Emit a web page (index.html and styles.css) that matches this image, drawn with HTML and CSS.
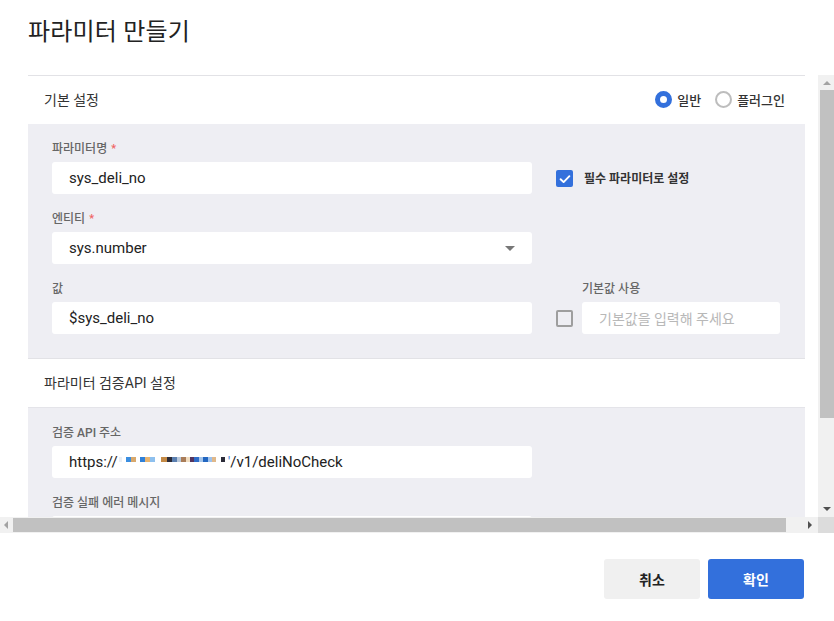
FILE: index.html
```html
<!DOCTYPE html>
<html lang="ko">
<head>
<meta charset="utf-8">
<title>파라미터 만들기</title>
<link rel="stylesheet" href="styles.css">
</head>
<body>
<div class="dialog">
  <header class="dlg-head">
    <h1 class="dlg-title">파라미터 만들기</h1>
  </header>

  <div class="scroll-frame">
    <div class="viewport">
      <div class="content">
        <section class="section">
          <div class="sec-head">
            <span class="sec-title">기본 설정</span>
            <div class="radios">
              <label class="radio on"><span class="radio-dot"></span>일반</label>
              <label class="radio"><span class="radio-dot"></span>플러그인</label>
            </div>
          </div>
          <div class="panel">
            <div class="row">
              <div class="col-main">
                <div class="label">파라미터명 <span class="req">*</span></div>
                <div class="input">sys_deli_no</div>
              </div>
              <div class="col-side align-input">
                <span class="check on"><svg viewBox="0 0 16 16" width="16" height="16"><path d="M3.6 8.2 L6.6 11.1 L12.4 5.2" fill="none" stroke="#fff" stroke-width="1.9" stroke-linecap="round" stroke-linejoin="round"/></svg></span>
                <span class="check-text">필수 파라미터로 설정</span>
              </div>
            </div>
            <div class="row">
              <div class="col-main">
                <div class="label">엔티티 <span class="req">*</span></div>
                <div class="input select">sys.number<span class="caret"></span></div>
              </div>
            </div>
            <div class="row">
              <div class="col-main">
                <div class="label">값</div>
                <div class="input">$sys_deli_no</div>
              </div>
              <div class="col-side align-input">
                <span class="check off"></span>
                <div class="default-field">
                  <div class="label">기본값 사용</div>
                  <div class="input small placeholder">기본값을 입력해 주세요</div>
                </div>
              </div>
            </div>
          </div>
        </section>

        <section class="section">
          <div class="sec-head">
            <span class="sec-title">파라미터 검증API 설정</span>
          </div>
          <div class="panel">
            <div class="row">
              <div class="col-main">
                <div class="label">검증 API 주소</div>
                <div class="input">https://<span class="mosaic"><i class="m0"></i><i class="gap"></i><i class="m1"></i><i class="m2"></i><i class="gap"></i><i class="m3"></i><i class="m4"></i><i class="m5"></i><i class="gap2"></i><i class="m6"></i><i class="m7"></i><i class="m8"></i><i class="m9"></i><i class="m10"></i><i class="m11"></i><i class="m12"></i><i class="m13"></i><i class="m14"></i><i class="m15"></i><i class="m16"></i><i class="m17"></i><i class="m18"></i></span><span class="apos">'</span>/v1/deliNoCheck</div>
              </div>
            </div>
            <div class="row">
              <div class="col-main">
                <div class="label">검증 실패 에러 메시지</div>
                <div class="input"></div>
              </div>
            </div>
          </div>
        </section>
      </div>
    </div>

    <div class="vbar">
      <span class="arr up"></span>
      <span class="vthumb"></span>
      <span class="arr down"></span>
    </div>
    <div class="hbar">
      <span class="arr left"></span>
      <span class="hthumb"></span>
      <span class="arr right"></span>
    </div>
    <div class="corner"></div>
  </div>

  <footer class="dlg-foot">
    <button class="btn cancel">취소</button>
    <button class="btn ok">확인</button>
  </footer>
</div>
</body>
</html>
```

FILE: styles.css
```css
* { box-sizing: border-box; }
html, body { margin: 0; padding: 0; }
body {
  width: 834px;
  height: 621px;
  background: #fff;
  font-family: Roboto, "Noto Sans CJK KR", sans-serif;
  color: #222;
  overflow: hidden;
}
.dialog { display: flex; flex-direction: column; height: 621px; }

.dlg-head { height: 75px; padding: 14px 28px 0; }
.dlg-title {
  margin: 0;
  font-size: 24px;
  line-height: 36px;
  font-weight: 400;
  color: #222;
  letter-spacing: 0.2px;
}

.scroll-frame {
  display: grid;
  grid-template-columns: 818px 16px;
  grid-template-rows: 442px 16px;
  height: 458px;
}
.viewport { overflow: hidden; }
.content { width: 833px; padding: 0 28px; }

.section { border-top: 1px solid #e2e2e6; }
.section + .section { border-top: none; }
.sec-head {
  height: 48px;
  display: flex;
  align-items: center;
  justify-content: space-between;
  padding: 0 20px 2px 16px;
}
.sec-title { font-size: 14px; color: #333; font-weight: 400; }

.radios { display: flex; gap: 14px; }
.radio {
  display: flex;
  align-items: center;
  gap: 5px;
  font-size: 13px;
  color: #333;
  font-weight: 500;
}
.radio-dot {
  width: 17px; height: 17px;
  border-radius: 50%;
  border: 2px solid #bdbdbd;
  background: #fff;
}
.radio.on .radio-dot {
  border: 5px solid #3370dc;
  background: #fff;
}

.panel {
  background: #eeeef3;
  padding: 16px 24px 24px;
  display: flex;
  flex-direction: column;
  gap: 16px;
  border-bottom: 1px solid #e2e2e6;
}
.section + .section .panel { border-top: 1px solid #e4e4e9; padding-top: 16px; }
.row { display: flex; gap: 24px; }
.col-main { width: 480px; display: flex; flex-direction: column; gap: 4px; }
.col-side { display: flex; gap: 10px; }
.col-side.align-input { align-items: flex-end; }

.label {
  height: 18px;
  display: flex;
  align-items: center;
  gap: 4px;
  font-size: 12px;
  line-height: 18px;
  color: #666;
  font-weight: 500;
  white-space: nowrap;
}
.req { color: #f06262; font-size: 11px; }

.input {
  height: 32px;
  background: #fff;
  border-radius: 3px;
  padding: 0 17px;
  display: flex;
  align-items: center;
  font-size: 15px;
  color: #222;
  white-space: nowrap;
}
.input.select { justify-content: space-between; padding-right: 17px; }
.caret {
  width: 0; height: 0;
  border-left: 5px solid transparent;
  border-right: 5px solid transparent;
  border-top: 5px solid #777;
}
.input.small { width: 198px; font-size: 14px; }
.placeholder { color: #b8b8b8; }

.check {
  width: 17px; height: 17px;
  border-radius: 2px;
  display: inline-flex;
  align-items: center;
  justify-content: center;
  flex: none;
}
.check.on { background: #3370dc; margin-bottom: 7px; }
.check.off { border: 2px solid #9e9e9e; background: transparent; margin-bottom: 7px; margin-right: -1px; }
.check-text { font-size: 12px; font-weight: 700; color: #333; margin-bottom: 8px; margin-left: 1px; }
.default-field { display: flex; flex-direction: column; gap: 4px; }

.mosaic { display: inline-flex; align-items: center; height: 8px; margin: 0 1px 5px 1px; }
.mosaic i { display: inline-block; height: 5px; width: 5px; }
.mosaic .gap { width: 4px; }
.mosaic .gap2 { width: 6px; }
.m0 { background: #e9eef5; width: 3px !important; }
.m1 { background: #3b8ee0; }
.m2 { background: #d8a86c; width: 5px !important; }
.m3 { background: #2f80d8; }
.m4 { background: #e8b470; }
.m5 { background: #8ec0ee; width: 5px !important; }
.m6 { background: #c48a46; width: 6px !important; }
.m7 { background: #2b2b38; }
.m8 { background: #5a7fb0; }
.m9 { background: #b9c8da; width: 4px !important; }
.m10 { background: #a97c58; }
.m11 { background: #f0dcc0; width: 4px !important; }
.m12 { background: #55355e; width: 4px !important; }
.m13 { background: #2e6cc8; }
.m14 { background: #a5c5ea; width: 4px !important; }
.m15 { background: #2266c0; }
.m16 { background: #9dc2ee; width: 4px !important; }
.m17 { background: #e0b88a; width: 4px !important; }
.m18 { background: #2b2b38; width: 4px !important; margin-left: 5px; }
.apos { color: #4a86d8; margin-left: 2px; }

.vbar {
  background: #f1f1f1;
  display: flex;
  flex-direction: column;
  align-items: center;
  padding-left: 2px;
}
.vthumb { width: 14px; height: 328px; background: #c1c1c1; }
.hbar {
  background: #f1f1f1;
  display: flex;
  align-items: center;
}
.hthumb { height: 14px; width: 773px; background: #c1c1c1; }
.corner { background: #dcdcdc; }

.arr { width: 0; height: 0; flex: none; }
.arr.up {
  margin: 6px 0 5px;
  border-left: 4px solid transparent;
  border-right: 4px solid transparent;
  border-bottom: 4px solid #a3a3a3;
}
.arr.down {
  margin: auto 0 6px;
  border-left: 4px solid transparent;
  border-right: 4px solid transparent;
  border-top: 4px solid #505050;
}
.arr.left {
  margin: 0 5px 0 4px;
  border-top: 4px solid transparent;
  border-bottom: 4px solid transparent;
  border-right: 4px solid #a3a3a3;
}
.arr.right {
  margin: 0 6px 0 auto;
  border-top: 4px solid transparent;
  border-bottom: 4px solid transparent;
  border-left: 4px solid #505050;
}

.dlg-foot {
  flex: 1;
  display: flex;
  justify-content: flex-end;
  gap: 8px;
  padding: 26px 30px 0 0;
}
.btn {
  width: 96px;
  height: 40px;
  border: none;
  border-radius: 3px;
  font-family: Roboto, "Noto Sans CJK KR", sans-serif;
  font-size: 14px;
  font-weight: 700;
  cursor: pointer;
}
.btn.cancel { background: #f0f0f0; color: #222; }
.btn.ok { background: #3370dc; color: #fff; }
```
